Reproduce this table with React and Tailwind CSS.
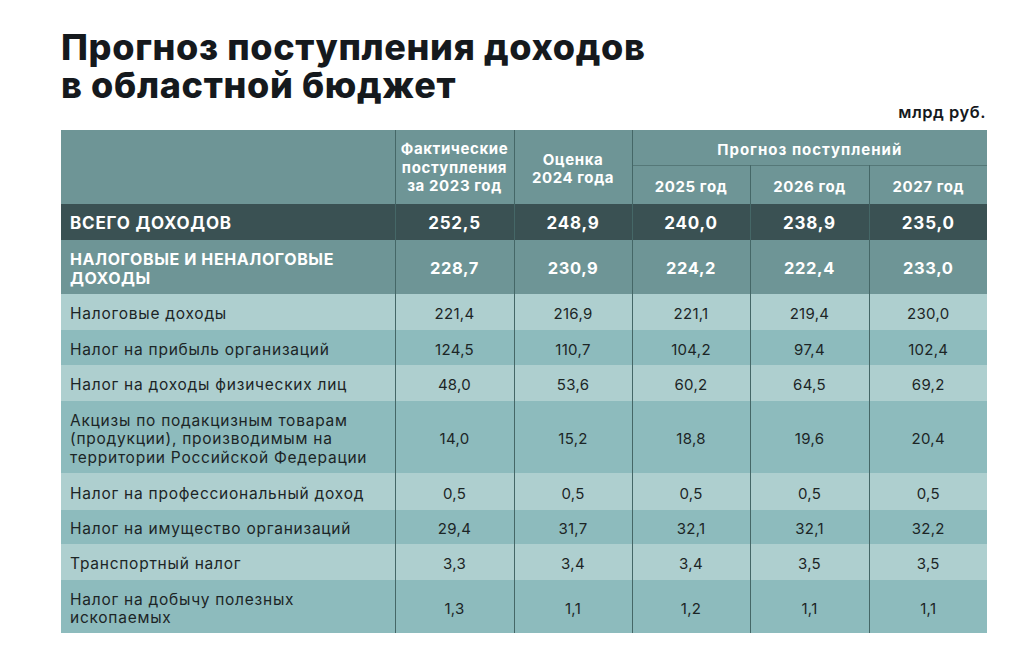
import React from "react";

const rows = [
  { label: "Налоговые доходы", v: ["221,4", "216,9", "221,1", "219,4", "230,0"], h: "h-[36px]", bg: "bg-[#aecfcf]" },
  { label: "Налог на прибыль организаций", v: ["124,5", "110,7", "104,2", "97,4", "102,4"], h: "h-[35px]", bg: "bg-[#8dbbbd]" },
  { label: "Налог на доходы физических лиц", v: ["48,0", "53,6", "60,2", "64,5", "69,2"], h: "h-[36px]", bg: "bg-[#aecfcf]" },
  { label: "Акцизы по подакцизным товарам (продукции), производимым на территории Российской Федерации", v: ["14,0", "15,2", "18,8", "19,6", "20,4"], h: "h-[72px]", bg: "bg-[#8dbbbd]" },
  { label: "Налог на профессиональный доход", v: ["0,5", "0,5", "0,5", "0,5", "0,5"], h: "h-[37px]", bg: "bg-[#aecfcf]" },
  { label: "Налог на имущество организаций", v: ["29,4", "31,7", "32,1", "32,1", "32,2"], h: "h-[34px]", bg: "bg-[#8dbbbd]" },
  { label: "Транспортный налог", v: ["3,3", "3,4", "3,4", "3,5", "3,5"], h: "h-[36px]", bg: "bg-[#aecfcf]" },
  { label: "Налог на добычу полезных ископаемых", v: ["1,3", "1,1", "1,2", "1,1", "1,1"], h: "h-[53px]", bg: "bg-[#8dbbbd]" },
];

const vb = "border-l border-[#456767]";

export default function App() {
  return (
    <div className="w-[1021px] h-[661px] bg-white overflow-hidden font-['Inter',sans-serif] text-[#1c2526]">
      <div className="pl-[61px] pt-[28px]">
        <h1 className="text-[36px] leading-[38px] font-extrabold tracking-[0.65px] text-[#15191d]">
          Прогноз поступления доходов
          <br />в областной бюджет
        </h1>
      </div>
      <div className="flex justify-end pr-[35px] mt-[-4px] h-[25px] text-[16.5px] font-semibold tracking-[0.5px] text-[#15191d]">
        млрд руб.
      </div>
      <table className="ml-[61px] mt-[5px] table-fixed border-collapse w-[926px]">
        <colgroup>
          <col className="w-[334px]" />
          <col className="w-[119px]" />
          <col className="w-[118px]" />
          <col className="w-[118px]" />
          <col className="w-[119px]" />
          <col className="w-[118px]" />
        </colgroup>
        <thead className="bg-[#6e9596] text-white font-bold text-[15px] leading-[18.5px] tracking-[0.6px]">
          <tr className="h-[35px]">
            <th rowSpan={2}></th>
            <th rowSpan={2} className={`${vb} font-bold pt-[2px]`}>
              Фактические
              <br />
              поступления
              <br />
              за 2023 год
            </th>
            <th rowSpan={2} className={`${vb} font-bold pt-[4px]`}>
              Оценка
              <br />
              2024 года
            </th>
            <th colSpan={3} className={`${vb} font-bold tracking-[1px] pt-[6px]`}>
              Прогноз поступлений
            </th>
          </tr>
          <tr className="h-[39px] border-t border-[#557878]">
            <th className={`${vb} font-bold pt-[4px]`}>2025 год</th>
            <th className={`${vb} font-bold pt-[4px]`}>2026 год</th>
            <th className={`${vb} font-bold pt-[4px]`}>2027 год</th>
          </tr>
        </thead>
        <tbody>
          <tr className="h-[36px] bg-[#3a5153] text-white font-bold text-[17px] tracking-[0.8px]">
            <td className="pl-[9px] pt-[3px]">ВСЕГО ДОХОДОВ</td>
            {["252,5", "248,9", "240,0", "238,9", "235,0"].map((v, i) => (
              <td key={i} className={`${vb} text-center pt-[3px]`}>{v}</td>
            ))}
          </tr>
          <tr className="h-[54px] bg-[#6e9596] text-white font-bold text-[16px] leading-[19px] tracking-[0.6px]">
            <td className="pl-[9px] pt-[3px]">
              НАЛОГОВЫЕ И НЕНАЛОГОВЫЕ
              <br />
              ДОХОДЫ
            </td>
            {["228,7", "230,9", "224,2", "222,4", "233,0"].map((v, i) => (
              <td key={i} className={`${vb} text-center pt-[3px] text-[16.5px]`}>{v}</td>
            ))}
          </tr>
          {rows.map((r, idx) => (
            <tr key={idx} className={`${r.h} ${r.bg} text-[15.5px] leading-[18.5px]`}>
              <td className="pl-[9px] pr-[12px] pt-[5px] tracking-[0.75px]">{r.label}</td>
              {r.v.map((v, i) => (
                <td key={i} className={`${vb} text-center pt-[5px] text-[15px] tracking-[0.3px]`}>{v}</td>
              ))}
            </tr>
          ))}
        </tbody>
      </table>
    </div>
  );
}
